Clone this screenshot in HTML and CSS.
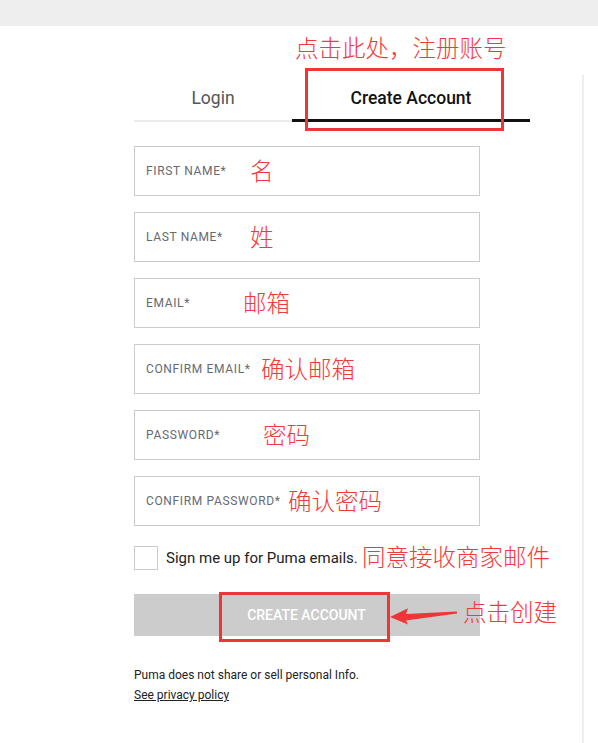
FILE: index.html
```html
<!DOCTYPE html>
<html lang="zh-CN">
<head>
<meta charset="utf-8">
<title>Create Account</title>
<link rel="stylesheet" href="styles.css">
</head>
<body>
<div class="topbar"></div>
<div class="hint-row"><span class="note">点击此处，注册账号</span></div>
<div class="panel">
  <div class="tabs">
    <div class="tab">Login</div>
    <div class="tab tab-active">Create Account<span class="mark mark-tab"></span></div>
  </div>
  <div class="fields">
    <div class="field"><span class="label">First Name*</span><span class="note note-field note-first">名</span></div>
    <div class="field"><span class="label">Last Name*</span><span class="note note-field note-last">姓</span></div>
    <div class="field"><span class="label">Email*</span><span class="note note-field note-email">邮箱</span></div>
    <div class="field"><span class="label">Confirm Email*</span><span class="note note-field note-cemail">确认邮箱</span></div>
    <div class="field"><span class="label">Password*</span><span class="note note-field note-pass">密码</span></div>
    <div class="field"><span class="label">Confirm Password*</span><span class="note note-field note-cpass">确认密码</span></div>
  </div>
  <div class="opt-in">
    <span class="checkbox"></span>
    <span class="opt-text">Sign me up for Puma emails.</span>
    <span class="note note-optin">同意接收商家邮件</span>
  </div>
  <div class="submit-wrap">
    <div class="submit">CREATE ACCOUNT</div>
    <span class="mark mark-btn"></span>
    <svg class="arrow" width="72" height="24" viewBox="0 0 72 24"><polygon points="2,13 20,4.3 18,10 69,7.6 69,9.6 18,16.5 20,20.5" fill="#ef3636"/></svg>
    <span class="note note-btn">点击创建</span>
  </div>
  <p class="legal">Puma does not share or sell personal Info.</p>
  <a class="policy" href="#">See privacy policy</a>
</div>
</body>
</html>
```
FILE: styles.css
```css
* { box-sizing: border-box; }
body {
  margin: 0;
  font-family: Roboto, "Liberation Sans", "Noto Sans CJK SC", sans-serif;
  color: #222;
  background: #fff;
  overflow: hidden;
}
.topbar { height: 26px; background: #eeeeee; }
.hint-row { height: 49px; padding: 9px 0 0 295px; }
.note {
  font-family: "Noto Sans CJK SC", sans-serif;
  color: #ef3b3b;
  font-size: 23.5px;
  line-height: 24px;
  font-weight: 300;
  white-space: nowrap;
}
.panel {
  width: 584px;
  min-height: 668px;
  border-right: 2px solid #eeeeee;
  padding-left: 134px;
}
.tabs { display: flex; width: 396px; height: 47px; }
.tab {
  position: relative;
  display: flex;
  align-items: center;
  justify-content: center;
  width: 158px;
  font-size: 17.5px;
  color: #555;
  border-bottom: 2px solid #eaeaea;
}
.tab-active {
  width: 238px;
  color: #111;
  font-weight: 500;
  border-bottom: 3px solid #111;
  padding-top: 1px;
}
.mark { position: absolute; border: 3px solid #ef3636; }
.mark-tab { left: 13px; top: -7px; width: 199px; height: 63px; }
.fields { display: flex; flex-direction: column; gap: 16px; width: 346px; margin-top: 24px; }
.field {
  position: relative;
  display: flex;
  align-items: center;
  height: 50px;
  border: 1px solid #cccccc;
  padding-left: 11px;
}
.label {
  font-size: 12px;
  text-transform: uppercase;
  letter-spacing: 0.65px;
  color: #666a70;
}
.note-field { position: absolute; top: 11px; }
.note-first { left: 115px; }
.note-last { left: 115px; }
.note-email { left: 108px; }
.note-cemail { left: 126px; }
.note-pass { left: 128px; }
.note-cpass { left: 153px; }
.opt-in {
  position: relative;
  display: flex;
  align-items: center;
  height: 24px;
  margin-top: 20px;
}
.checkbox { width: 24px; height: 24px; border: 1px solid #cccccc; }
.opt-text { margin-left: 8px; font-size: 15px; color: #222; }
.note-optin { position: absolute; left: 228px; top: -2px; }
.submit-wrap { position: relative; width: 346px; margin-top: 24px; }
.submit {
  height: 42px;
  background: #cccccc;
  color: #fff;
  font-size: 14px;
  font-weight: 500;
  display: flex;
  align-items: center;
  justify-content: center;
  padding-right: 1px;
}
.mark-btn { left: 85px; top: -2px; width: 171px; height: 50px; }
.arrow { position: absolute; left: 254px; top: 10px; }
.note-btn { position: absolute; left: 329px; top: 5px; }
.legal { margin: 30px 0 0; font-size: 12px; line-height: 18px; color: #222; }
.policy { display: inline-block; font-size: 12px; line-height: 19px; color: #222; text-decoration: underline; }
```
